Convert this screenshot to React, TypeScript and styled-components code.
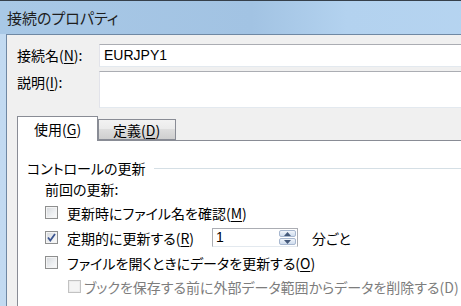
import React from 'react';
import styled, { createGlobalStyle } from 'styled-components';

const GlobalStyle = createGlobalStyle`
  html, body {
    margin: 0;
    padding: 0;
    overflow: hidden;
    background: #f0f0f0;
  }
  body {
    width: 461px;
    height: 306px;
  }
`;

const Window = styled.div`
  width: 560px;
  height: 306px;
  overflow: hidden;
  display: flex;
  flex-direction: column;
  background: linear-gradient(90deg, #c2daf1 0%, #b3cfea 60%, #a9c8e6 100%);
  font-family: "Meiryo UI", "Noto Sans CJK JP", sans-serif;
  font-feature-settings: "palt";
  color: #000;
`;

const TitleBar = styled.div`
  height: 33px;
  flex: none;
  border-top: 1px solid #36404b;
  background: linear-gradient(90deg, #a8c8e6 0%, #a2c3e3 45%, #b3d2ef 62%, #b7d5f1 100%);
  display: flex;
  align-items: center;
  padding-left: 7px;
  font-size: 15px;
  color: #1e1e1e;
`;

const Client = styled.div`
  flex: 1;
  margin-left: 6px;
  border-left: 1px solid #6f88a3;
  border-top: 1px solid #6f88a3;
  background: #f0f0f0;
  padding: 9px 0 0 10px;
  display: flex;
  flex-direction: column;
  font-size: 14px;
`;

const FieldRow = styled.div`
  display: flex;
  align-items: flex-start;
  margin-bottom: 4px;
`;

const FieldLabel = styled.label`
  width: 82px;
  flex: none;
  height: 23px;
  line-height: 23px;
`;

const TextBox = styled.div<{ $height: number }>`
  flex: 1;
  height: ${(p) => p.$height - 2}px;
  border: 1px solid #abadb3;
  border-bottom-color: #e3e9ef;
  border-left-color: #e2e3ea;
  background: #fff;
  padding-left: 4px;
  line-height: ${(p) => p.$height - 2}px;
  font-family: "Liberation Sans", "Noto Sans", sans-serif;
  font-size: 14px;
`;

const Key = styled.span`
  text-decoration: underline;
  text-underline-offset: 2px;
`;

const TabStrip = styled.div`
  margin-top: 4px;
  height: 24px;
  display: flex;
  align-items: flex-end;
`;

const Tab = styled.div<{ $active?: boolean }>`
  box-sizing: border-box;
  width: ${(p) => (p.$active ? 81 : 78)}px;
  height: ${(p) => (p.$active ? 25 : 21)}px;
  margin-bottom: ${(p) => (p.$active ? -1 : 0)}px;
  margin-left: ${(p) => (p.$active ? 0 : -0)}px;
  padding-left: ${(p) => (p.$active ? 16 : 14)}px;
  border: 1px solid #898c95;
  border-bottom: ${(p) => (p.$active ? 'none' : '1px solid #898c95')};
  background: ${(p) =>
    p.$active
      ? '#fff'
      : 'linear-gradient(180deg, #f2f2f2 0%, #ebebeb 45%, #dddddd 50%, #cfcfcf 100%)'};
  display: flex;
  align-items: center;
  position: relative;
  z-index: ${(p) => (p.$active ? 1 : 0)};
  line-height: 1;
`;

const Panel = styled.div`
  flex: 1;
  border-top: 1px solid #898c95;
  border-left: 1px solid #898c95;
  background: #fff;
  padding: 17px 0 0 9px;
  display: flex;
  flex-direction: column;
`;

const GroupHeader = styled.div`
  height: 20px;
  display: flex;
  align-items: center;
  gap: 8px;

  &::after {
    content: '';
    flex: 1;
    height: 1px;
    background: #d5dfe5;
  }
`;

const Row = styled.div<{ $indent: number; $height: number; $disabled?: boolean }>`
  height: ${(p) => p.$height}px;
  padding-left: ${(p) => p.$indent}px;
  display: flex;
  align-items: center;
  color: ${(p) => (p.$disabled ? '#7d7d7d' : '#000')};
  white-space: nowrap;
`;

const Box = styled.span<{ $disabled?: boolean }>`
  box-sizing: border-box;
  width: 13px;
  height: 13px;
  flex: none;
  border: 1px solid ${(p) => (p.$disabled ? '#c2c2c2' : '#8e8f8f')};
  background: ${(p) =>
    p.$disabled ? '#f4f4f4' : 'linear-gradient(135deg, #d4d7db 0%, #eef0f2 60%, #fbfbfb 100%)'};
  box-shadow: inset 0 0 0 1px ${(p) => (p.$disabled ? '#ececec' : '#f4f4f4')};
  display: flex;
  align-items: center;
  justify-content: center;
  margin-right: ${(p) => (p.$disabled ? 3 : 9)}px;
`;

const CheckText = styled.span<{ $width?: number }>`
  width: ${(p) => (p.$width ? `${p.$width}px` : 'auto')};
  flex: none;
`;

const SpinBox = styled.div`
  box-sizing: border-box;
  width: 86px;
  height: 19px;
  border: 1px solid #abadb3;
  border-bottom-color: #e3e9ef;
  background: #fff;
  display: flex;
  align-items: stretch;
  margin-right: 14px;
`;

const SpinValue = styled.span`
  flex: 1;
  padding-left: 3px;
  line-height: 17px;
  font-family: "Liberation Sans", "Noto Sans", sans-serif;
  font-size: 14px;
`;

const SpinButtons = styled.div`
  width: 17px;
  display: flex;
  flex-direction: column;
  gap: 1px;
  padding: 1px 1px 1px 0;
`;

const SpinButton = styled.div`
  flex: 1;
  border: 1px solid #a7b7cf;
  border-radius: 2px;
  background: linear-gradient(180deg, #f2f6fb 0%, #dfe8f4 50%, #cfdcee 100%);
  display: flex;
  align-items: center;
  justify-content: center;
`;

const Arrow = ({ up }: { up?: boolean }) => (
  <svg width="7" height="4" viewBox="0 0 7 4">
    <path d={up ? 'M0 4 L3.5 0 L7 4 Z' : 'M0 0 L3.5 4 L7 0 Z'} fill="#44597a" />
  </svg>
);

const CheckBox = ({ checked, disabled }: { checked?: boolean; disabled?: boolean }) => (
  <Box $disabled={disabled}>
    {checked && (
      <svg width="9" height="9" viewBox="0 0 9 9">
        <path d="M1 4.5 L3.3 7.5 L8 1" stroke="#3c5590" strokeWidth="1.8" fill="none" />
      </svg>
    )}
  </Box>
);

export default function App() {
  return (
    <Window>
      <GlobalStyle />
      <TitleBar>接続のプロパティ</TitleBar>
      <Client>
        <FieldRow>
          <FieldLabel>
            接続名(<Key>N</Key>):
          </FieldLabel>
          <TextBox $height={23}>EURJPY1</TextBox>
        </FieldRow>
        <FieldRow>
          <FieldLabel>
            説明(<Key>I</Key>):
          </FieldLabel>
          <TextBox $height={37} />
        </FieldRow>

        <TabStrip>
          <Tab $active>
            使用(<Key>G</Key>)
          </Tab>
          <Tab>
            定義(<Key>D</Key>)
          </Tab>
        </TabStrip>
        <Panel>
          <GroupHeader>コントロールの更新</GroupHeader>
          <Row $indent={18} $height={22}>前回の更新:</Row>
          <Row $indent={18} $height={25}>
            <CheckBox />
            <CheckText>
              更新時にファイル名を確認(<Key>M</Key>)
            </CheckText>
          </Row>
          <Row $indent={18} $height={25}>
            <CheckBox checked />
            <CheckText $width={145}>
              定期的に更新する(<Key>R</Key>)
            </CheckText>
            <SpinBox>
              <SpinValue>1</SpinValue>
              <SpinButtons>
                <SpinButton>
                  <Arrow up />
                </SpinButton>
                <SpinButton>
                  <Arrow />
                </SpinButton>
              </SpinButtons>
            </SpinBox>
            <span>分ごと</span>
          </Row>
          <Row $indent={18} $height={25}>
            <CheckBox />
            <CheckText>
              ファイルを開くときにデータを更新する(<Key>O</Key>)
            </CheckText>
          </Row>
          <Row $indent={41} $height={23} $disabled>
            <CheckBox disabled />
            <CheckText>ブックを保存する前に外部データ範囲からデータを削除する(D)</CheckText>
          </Row>
        </Panel>
      </Client>
    </Window>
  );
}
